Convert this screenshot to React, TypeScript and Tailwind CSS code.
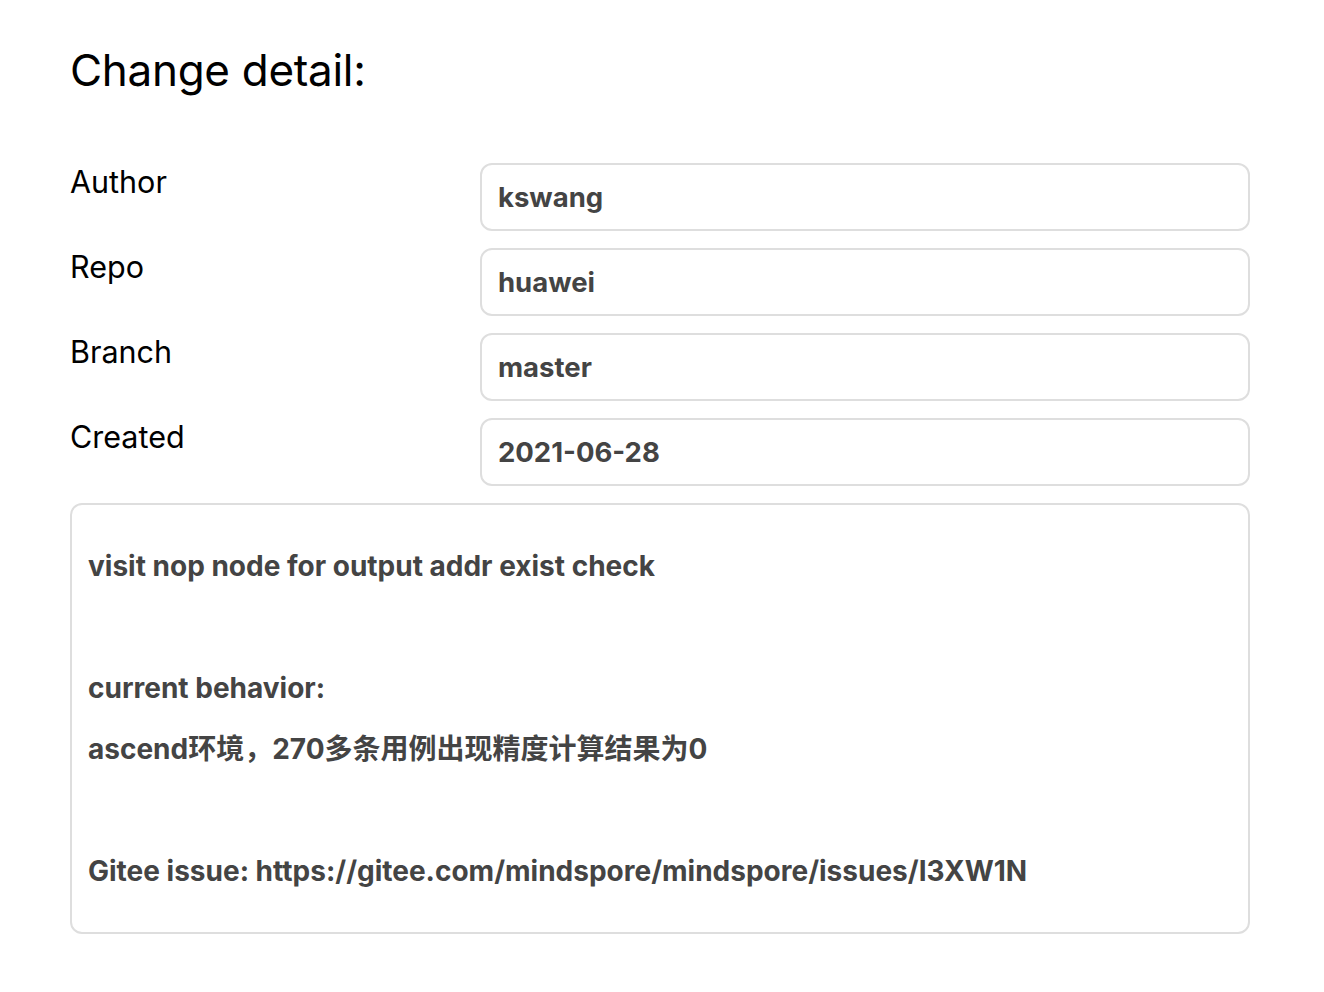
import React from 'react';

const fields = [
    { label: 'Author', value: 'kswang' },
    { label: 'Repo', value: 'huawei' },
    { label: 'Branch', value: 'master' },
    { label: 'Created', value: '2021-06-28' },
];

const lines = [
    'visit nop node for output addr exist check',
    '',
    'current behavior:',
    'ascend环境，270多条用例出现精度计算结果为0',
    '',
    'Gitee issue: https://gitee.com/mindspore/mindspore/issues/I3XW1N',
];

export default function App() {
    return (
        <div
            className="min-h-[992px] bg-white px-[70px] pt-[40px] text-black"
            style={{ fontFamily: 'Inter, "Noto Sans CJK SC", sans-serif' }}
        >
            <h1 className="text-[44px] leading-[60px] font-normal tracking-[-0.3px]">Change detail:</h1>
            <div className="mt-[63px] w-[1180px] flex flex-col gap-[17px]">
                {fields.map((f) => (
                    <div key={f.label} className="flex">
                        <div className="w-[410px] text-[30.5px] leading-[38px]">{f.label}</div>
                        <div className="flex-1 h-[68px] rounded-[12px] border-2 border-[#dedede] flex items-center pl-[16px] pt-[1px] text-[27.5px] font-bold text-[#444]">
                            {f.value}
                        </div>
                    </div>
                ))}
            </div>
            <div className="mt-[17px] w-[1180px] rounded-[12px] border-2 border-[#dedede] px-[16px] pt-[31px] pb-[30px] text-[28px] font-bold text-[#444]">
                {lines.map((l, i) => (
                    <div key={i} className="h-[61px] leading-[61px] whitespace-nowrap">{l}</div>
                ))}
            </div>
        </div>
    );
}
